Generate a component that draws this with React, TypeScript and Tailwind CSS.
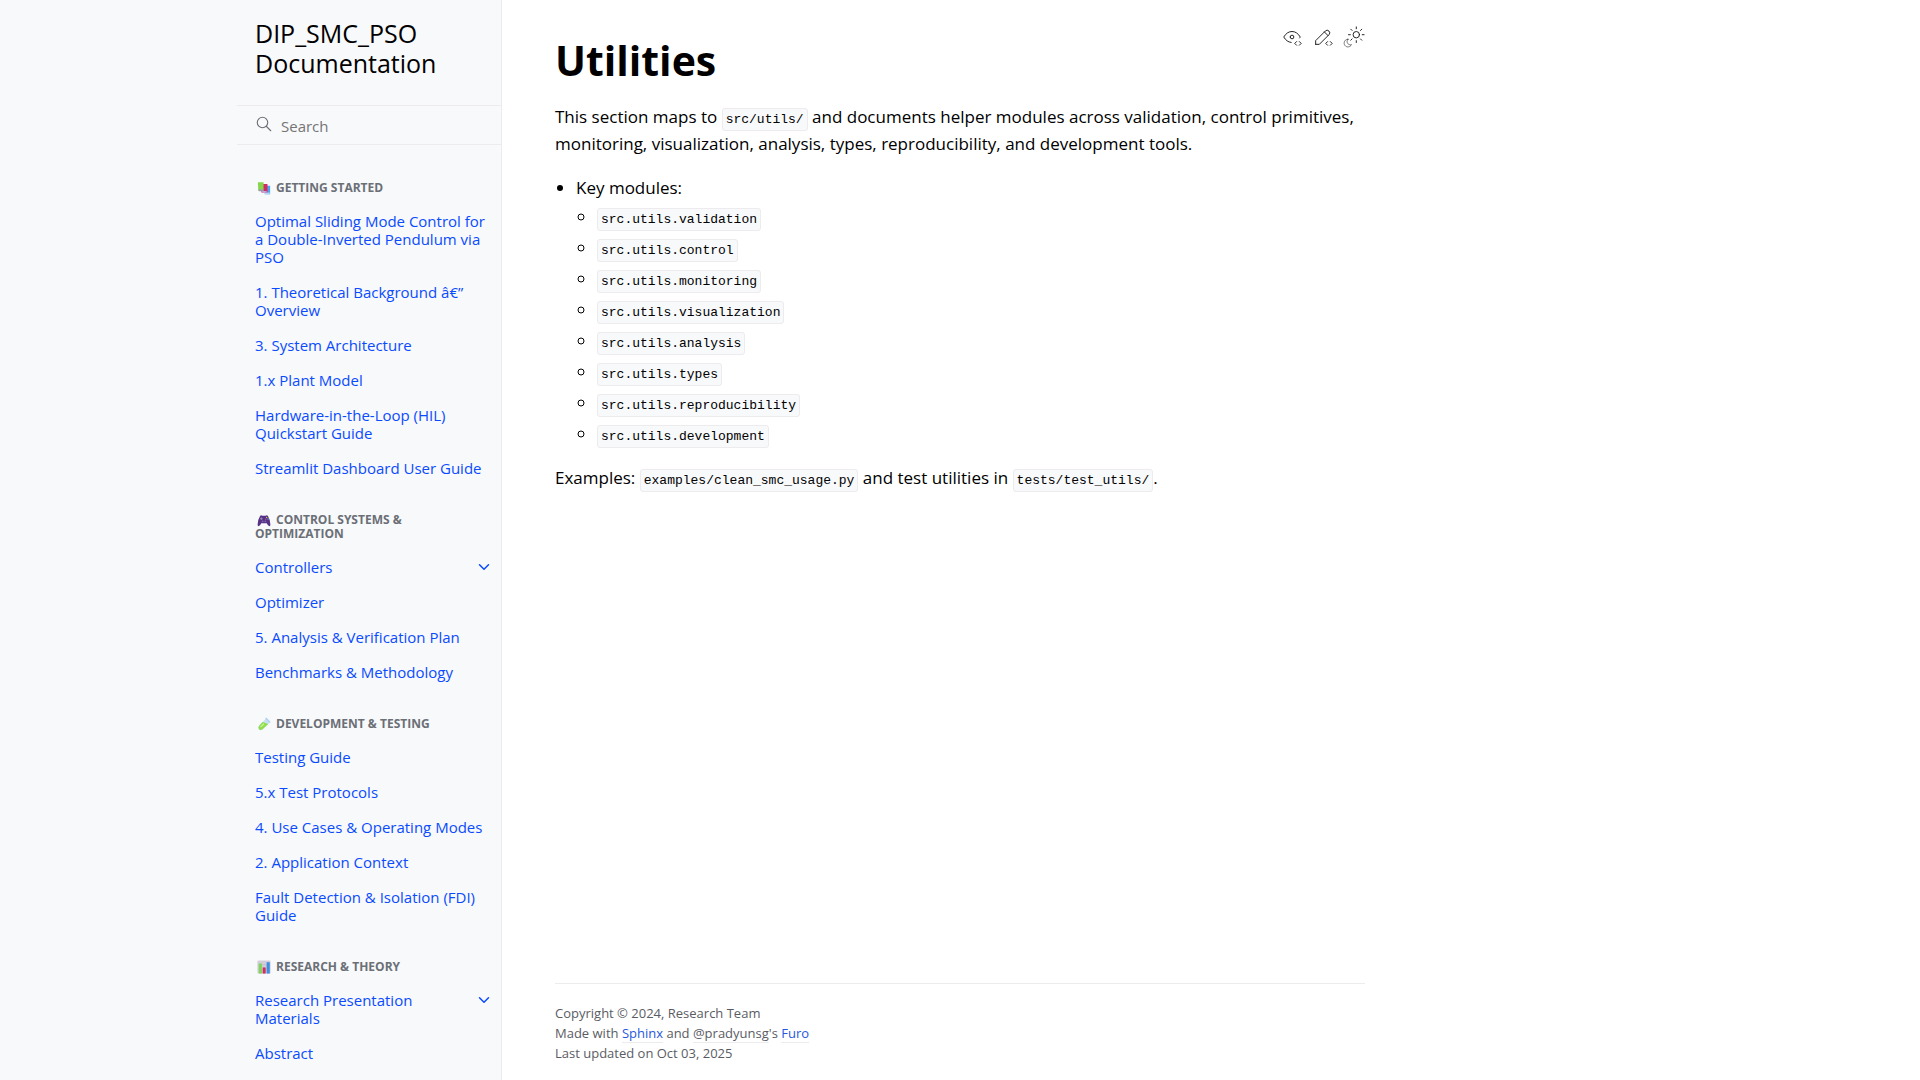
import React from "react";

type NavItem = { label: string; expandable?: boolean };
type NavSection = { title: string; icon: React.ReactNode; items: NavItem[] };

function BooksIcon() {
  return (
    <svg viewBox="0 0 16 16" className="h-[14px] w-[14px]" aria-hidden="true">
      <path d="M8 5.5h7v9.5H9z" fill="#4aa8ee" />
      <path d="M8 13h6.5v2H9z" fill="#b9d8f5" />
      <path d="M4.5 3.5h7.5v9.5h-7z" fill="#d42a62" />
      <path d="M5 11.500h6v1.800H6z" fill="#c9a6d8" />
      <path d="M1 1.500h6.500v10H1.500z" fill="#86d64c" />
      <path d="M1.500 9.800h6v2h-5z" fill="#9c93b8" />
    </svg>
  );
}

function GamepadIcon() {
  return (
    <svg viewBox="0 0 16 16" className="h-[14px] w-[14px]" aria-hidden="true">
      <path
        d="M3.500 3.500Q4.500 2 6 3h4q1.500-1 2.500.500Q15 7.500 15.300 13q.200 2-1.300 2-1.500 0-2.800-3.300H4.800Q3.500 15 2 15q-1.500 0-1.300-2Q1 7.500 3.500 3.500z"
        fill="#553285"
      />
      <path d="M3.500 6.500h3M5 5v3" stroke="#9a8bb8" />
      <circle cx="11" cy="5" r=".8" fill="#e9c34a" />
      <circle cx="12.600" cy="6.800" r=".8" fill="#4ab8e8" />
      <circle cx="10" cy="7" r=".8" fill="#d8588a" />
      <circle cx="6.500" cy="9.500" r="1" fill="#8266ad" />
      <circle cx="9.500" cy="9.500" r="1" fill="#8266ad" />
    </svg>
  );
}

function TestTubeIcon() {
  return (
    <svg viewBox="0 0 16 16" className="h-[14px] w-[14px]" aria-hidden="true">
      <path d="M10 2l4.500 4.500-8 7.500q-2.500 2-4.300.200Q.500 12 2.500 9.800z" fill="#c9e0f4" />
      <path d="M6.500 5.800l6.300 2.200-6.500 6q-2.300 1.700-4 .100Q.800 12.200 2.500 10z" fill="#8fdc4c" />
      <path d="M4 11.500l4-3.800" stroke="#c8f296" strokeWidth="1.500" />
      <path d="M10 1.200l5 5" stroke="#a9cdf0" strokeWidth="1.600" />
    </svg>
  );
}

function BarChartIcon() {
  return (
    <svg viewBox="0 0 16 16" className="h-[14px] w-[14px]" aria-hidden="true">
      <rect x=".5" y=".5" width="15" height="15" rx="1.500" fill="#d3cdda" />
      <path d="M1 5.500h14M1 10.500h14" stroke="#bdb5c9" strokeWidth=".6" />
      <rect x="2" y="4" width="3.600" height="11.500" fill="#7fd65a" />
      <rect x="6.500" y="8.500" width="3.400" height="7" fill="#d12f5c" />
      <rect x="11" y="2.500" width="3.600" height="13" fill="#3f8fdc" />
    </svg>
  );
}

const sections: NavSection[] = [
  {
    title: "Getting Started",
    icon: <BooksIcon />,
    items: [
      { label: "Optimal Sliding Mode Control for a Double-Inverted Pendulum via PSO" },
      { label: "1. Theoretical Background â€” Overview" },
      { label: "3. System Architecture" },
      { label: "1.x Plant Model" },
      { label: "Hardware-in-the-Loop (HIL) Quickstart Guide" },
      { label: "Streamlit Dashboard User Guide" },
    ],
  },
  {
    title: "Control Systems & Optimization",
    icon: <GamepadIcon />,
    items: [
      { label: "Controllers", expandable: true },
      { label: "Optimizer" },
      { label: "5. Analysis & Verification Plan" },
      { label: "Benchmarks & Methodology" },
    ],
  },
  {
    title: "Development & Testing",
    icon: <TestTubeIcon />,
    items: [
      { label: "Testing Guide" },
      { label: "5.x Test Protocols" },
      { label: "4. Use Cases & Operating Modes" },
      { label: "2. Application Context" },
      { label: "Fault Detection & Isolation (FDI) Guide" },
    ],
  },
  {
    title: "Research & Theory",
    icon: <BarChartIcon />,
    items: [{ label: "Research Presentation Materials", expandable: true }, { label: "Abstract" }],
  },
];

const modules = [
  "src.utils.validation",
  "src.utils.control",
  "src.utils.monitoring",
  "src.utils.visualization",
  "src.utils.analysis",
  "src.utils.types",
  "src.utils.reproducibility",
  "src.utils.development",
];

function Code({ children }: { children: React.ReactNode }) {
  return (
    <code className="rounded-[3px] border border-[#eeebee] bg-[#f8f9fb] px-[3px] py-[3px] font-['Liberation_Mono',monospace] text-[13px] leading-none">
      {children}
    </code>
  );
}

function LineIcon({ children }: { children: React.ReactNode }) {
  return (
    <svg
      viewBox="0 0 24 24"
      className="h-[22px] w-[22px]"
      fill="none"
      stroke="currentColor"
      strokeWidth="1"
      strokeLinecap="round"
      strokeLinejoin="round"
      aria-hidden="true"
    >
      {children}
    </svg>
  );
}

function Sidebar() {
  return (
    <aside className="sticky top-0 flex h-screen justify-end border-r border-[#eeebee] bg-[#f8f9fb]">
      <div className="flex h-full w-[264px] flex-col overflow-y-auto [scrollbar-width:none]">
        <a href="#" className="block px-[18px] pt-[18px] pb-[27px] text-[25px] leading-[30px] text-black">
          DIP_SMC_PSO Documentation
        </a>
        <form
          role="search"
          className="flex h-[40px] shrink-0 items-center gap-[8px] border-y border-[#eeebee] pl-[18px]"
          onSubmit={(e) => e.preventDefault()}
        >
          <svg
            viewBox="0 0 24 24"
            className="mb-[2px] h-[18px] w-[18px] shrink-0"
            fill="none"
            stroke="#6b6f76"
            strokeWidth="1.500"
            strokeLinecap="round"
            aria-hidden="true"
          >
            <circle cx="10" cy="10" r="7" />
            <path d="M21 21l-6-6" />
          </svg>
          <input
            type="search"
            aria-label="Search"
            placeholder="Search"
            className="w-full min-w-0 bg-transparent pt-[2px] text-[15px] outline-none placeholder:text-[#757575]"
          />
        </form>
        <nav aria-label="Documentation" className="pt-[10px]">
          {sections.map((section) => (
            <section key={section.title} className="pt-[26px]">
              <h2 className="px-[18px] pb-[10px] text-[12px] leading-[14px] font-bold text-[#6b6f76] uppercase">
                <span className="mr-[5px] ml-[2px] inline-block align-[-3px]">{section.icon}</span>
                {section.title}
              </h2>
              <ul>
                {section.items.map((item) => (
                  <li key={item.label} className="flex items-start">
                    <a
                      href="#"
                      className="min-w-0 flex-1 pt-[7px] pr-[8px] pb-[10px] pl-[18px] text-[15px] leading-[18px] text-[#0a4bff]"
                    >
                      {item.label}
                    </a>
                    {item.expandable && (
                      <button
                        type="button"
                        aria-label={`Expand ${item.label}`}
                        className="flex h-[32px] w-[35px] items-center justify-center text-[#0a4bff]"
                      >
                        <svg
                          viewBox="0 0 24 24"
                          className="h-[18px] w-[18px]"
                          fill="none"
                          stroke="currentColor"
                          strokeWidth="2"
                          strokeLinecap="round"
                          strokeLinejoin="round"
                          aria-hidden="true"
                        >
                          <path d="M6 9l6 6 6-6" />
                        </svg>
                      </button>
                    )}
                  </li>
                ))}
              </ul>
            </section>
          ))}
        </nav>
      </div>
    </aside>
  );
}

function PageActions() {
  return (
    <div className="float-right flex gap-[9px] pt-[26px] text-[#111]">
      <a href="#" aria-label="View this page">
        <LineIcon>
          <path d="M10 12a2 2 0 1 0 4 0a2 2 0 0 0 -4 0" />
          <path d="M11.110 17.958c-3.209 -.307 -5.910 -2.293 -8.110 -5.958c2.400 -4 5.400 -6 9 -6c3.600 0 6.600 2 9 6c-.210 .352 -.427 .688 -.647 1.008" />
          <path d="M20 21l2 -2l-2 -2" />
          <path d="M17 17l-2 2l2 2" />
        </LineIcon>
      </a>
      <a href="#" aria-label="Edit this page">
        <LineIcon>
          <path d="M4 20h4l10.500 -10.500a2.828 2.828 0 1 0 -4 -4l-10.500 10.500v4" />
          <path d="M13.500 6.500l4 4" />
          <path d="M20 21l2 -2l-2 -2" />
          <path d="M17 17l-2 2l2 2" />
        </LineIcon>
      </a>
      <button type="button" aria-label="Toggle light, dark or auto colour theme">
        <LineIcon>
          <path
            strokeWidth=".6"
            d="M5.411 14.504C5.471 14.504 5.532 14.504 5.591 14.504C3.639 16.319 4.383 19.569 6.931 20.352C7.693 20.586 8.512 20.551 9.250 20.252C8.023 23.207 4.056 23.725 2.110 21.184C.166 18.642 1.702 14.949 4.874 14.536C5.051 14.512 5.231 14.500 5.411 14.500z"
          />
          <circle cx="14.500" cy="9.500" r="3.500" />
          <path d="M14.500 1v2M14.500 16v2M6 9.500h2M21 9.500h2M8.500 3.500l1.400 1.400M19.100 14.100l1.400 1.400M8.500 15.500l1.400-1.400M19.100 4.900l1.400-1.400" />
        </LineIcon>
      </button>
    </div>
  );
}

export default function App() {
  return (
    <div className="grid min-h-screen grid-cols-[calc(50%_-_458px)_minmax(0,1fr)] bg-white font-['Open_Sans',sans-serif] text-black">
      <Sidebar />
      <div className="flex min-h-screen max-w-[863px] flex-col pl-[53px]">
        <main className="flex-1">
          <PageActions />
          <article className="text-[17px] leading-[27px]">
            <h1 className="pt-[33px] pb-[16px] text-[41px] leading-[54px] font-bold">Utilities</h1>
            <p className="mb-[17px]">
              This section maps to <Code>src/utils/</Code> and documents helper modules across validation, control
              primitives, monitoring, visualization, analysis, types, reproducibility, and development tools.
            </p>
            <ul className="mb-[13px] list-disc pl-[21px]">
              <li>
                Key modules:
                <ul className="mt-[2px] list-[circle] pl-[21px]">
                  {modules.map((name) => (
                    <li key={name} className="h-[31px]">
                      <Code>{name}</Code>
                    </li>
                  ))}
                </ul>
              </li>
            </ul>
            <p>
              Examples: <Code>examples/clean_smc_usage.py</Code> and test utilities in <Code>tests/test_utils/</Code>.
            </p>
          </article>
        </main>
        <footer className="border-t border-[#eeebee] pt-[19px] pb-[17px] text-[13px] leading-[20px] text-[#5a5c63]">
          <p>Copyright © 2024, Research Team</p>
          <p>
            Made with{" "}
            <a href="#" className="text-[#2757dd] underline decoration-[#eeebee] underline-offset-4">
              Sphinx
            </a>{" "}
            and{" "}
            <a href="#" className="underline decoration-[#eeebee] underline-offset-4">
              @pradyunsg
            </a>
            's{" "}
            <a href="#" className="text-[#2757dd] underline decoration-[#eeebee] underline-offset-4">
              Furo
            </a>
          </p>
          <p>Last updated on Oct 03, 2025</p>
        </footer>
      </div>
    </div>
  );
}
